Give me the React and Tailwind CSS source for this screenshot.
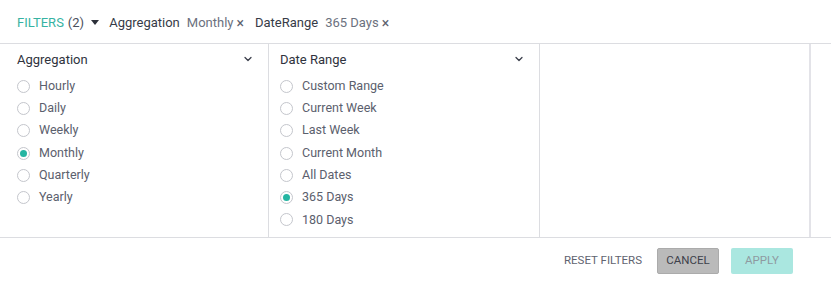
import { ChevronDown } from 'lucide-react';

const groups = [
  {
    title: 'Aggregation',
    options: ['Hourly', 'Daily', 'Weekly', 'Monthly', 'Quarterly', 'Yearly'],
    selected: 'Monthly',
  },
  {
    title: 'Date Range',
    options: ['Custom Range', 'Current Week', 'Last Week', 'Current Month', 'All Dates', '365 Days', '180 Days'],
    selected: '365 Days',
  },
];

const Radio = ({ checked }) => (
  <span className="w-[13px] h-[13px] rounded-full border border-[#c4c6cc] bg-white flex items-center justify-center flex-shrink-0">
    {checked && <span className="w-[7px] h-[7px] rounded-full bg-[#26b5a2]" />}
  </span>
);

const Chip = ({ label, value }) => (
  <div className="flex items-center">
    <span className="text-[#363b47] mr-[7px]">{label}</span>
    <span className="text-[#6c717e]">{value}</span>
    <span className="text-[#5c616e] ml-[3px] text-[14px] leading-none">×</span>
  </div>
);

export default function App() {
  return (
    <div className="w-[831px] h-[281px] bg-white text-[13px] font-['Roboto',sans-serif] flex flex-col">
      {/* HEADER */}
      <div className="h-[44px] flex items-center pl-[17px] pt-[2px] gap-[11px] border-b border-[#dcdde1]">
        <div className="flex items-center mr-[-1px]">
          <span className="text-[#36b3a3]">FILTERS</span>
          <span className="text-[#4a4f5b] ml-[4px]">(2)</span>
          <span className="ml-[7px] w-0 h-0 border-l-[4px] border-r-[4px] border-t-[5px] border-l-transparent border-r-transparent border-t-[#2c303a]" />
        </div>
        <Chip label="Aggregation" value="Monthly" />
        <Chip label="DateRange" value="365 Days" />
      </div>

      {/* PANELS */}
      <div className="h-[194px] flex border-b border-[#dcdde1]">
        {groups.map((g, i) => (
          <div
            key={g.title}
            className={`border-r border-[#dcdde1] flex flex-col ${i === 0 ? 'pl-[17px] w-[269px]' : 'pl-[11px] w-[271px]'} pr-[14px]`}
          >
            <div className="h-[31px] flex items-center justify-between">
              <span className="text-[#2f333d]">{g.title}</span>
              <ChevronDown size={12} strokeWidth={2.5} className="text-[#3a3e4a] mb-[2px]" />
            </div>
            <div className="flex flex-col">
              {g.options.map(o => (
                <div key={o} className="h-[22.3px] flex items-center gap-[8px]">
                  <Radio checked={o === g.selected} />
                  <span className="text-[#5b606d] text-[12.5px] ml-[1px]">{o}</span>
                </div>
              ))}
            </div>
          </div>
        ))}
        <div className="w-[271px] border-r-2 border-[#e3e3e8]" />
      </div>

      {/* FOOTER */}
      <div className="flex-1 flex items-center justify-end pr-[38px] pt-[2px] text-[11.5px]">
        <button className="text-[#5f6470] mr-[15px]">RESET FILTERS</button>
        <button className="w-[62px] h-[26px] rounded-[2px] bg-[#bababa] border border-[#ababab] text-[#3d414b] mr-[12px]">
          CANCEL
        </button>
        <button className="w-[62px] h-[26px] rounded-[2px] bg-[#aae7e0] text-[#8f9aa0]">
          APPLY
        </button>
      </div>
    </div>
  );
}
